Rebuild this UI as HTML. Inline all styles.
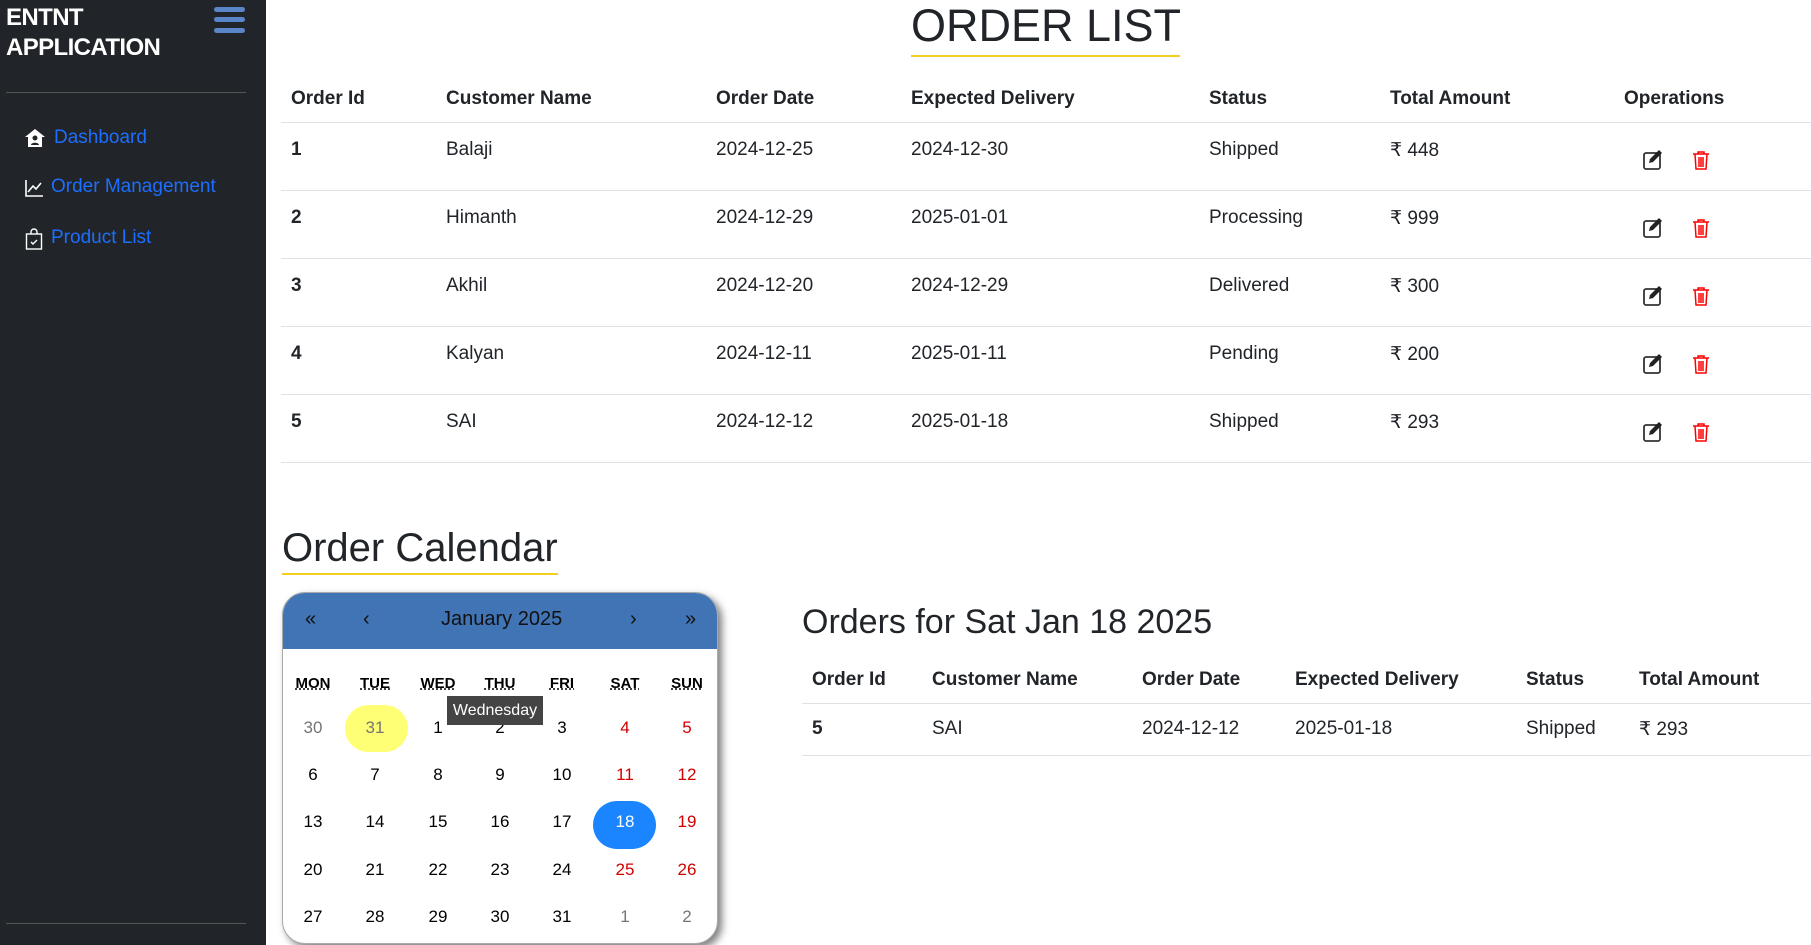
<!DOCTYPE html>
<html><head><meta charset="utf-8"><style>
*{margin:0;padding:0;box-sizing:border-box}
body{width:1811px;height:945px;overflow:hidden;background:#fff;font-family:"Liberation Sans",sans-serif;color:#212529;position:relative}
.sb{position:absolute;left:0;top:0;width:266px;height:945px;background:#212529}
.abs{position:absolute;white-space:nowrap}
.brand{left:6px;top:3px;color:#fff;font-size:24px;font-weight:bold;line-height:30px;letter-spacing:-0.6px}
.hb{left:214px;width:31px;height:5px;border-radius:3px;background:#5b85c9}
.nav{color:#1c6efd;font-size:19px;left:54px}
th,td{text-align:left;font-size:19px}
.t{position:absolute;border-collapse:collapse}
.t th{font-weight:bold;height:46px;border-bottom:1px solid #dee2e6;padding-left:10px}
.t td{border-bottom:1px solid #dee2e6;padding-left:10px;vertical-align:top}
.t1 td{height:68px;padding-top:16px}
.t1 td:first-child{font-weight:bold}
.cal{left:282px;top:592px;width:436px;height:352px;border:1px solid #aaa;border-radius:23px;overflow:hidden;box-shadow:4px 4px 8px rgba(0,0,0,.5);background:#fff}
.ch{height:56px;background:#4174b5;position:relative;font-size:20px;color:#111}
.ch span{position:absolute;top:15px}
.d{position:absolute;width:62px;text-align:center;font-size:17px;color:#000}
.w{font-weight:bold;font-size:15px;text-decoration:underline dotted}
.r{color:#d10000}.g{color:#757575}
</style></head><body>
<div class="sb">
<div class="abs brand">ENTNT<br>APPLICATION</div>
<div class="abs hb" style="top:7px"></div><div class="abs hb" style="top:17px"></div><div class="abs hb" style="top:28px"></div>
<div class="abs" style="left:6px;top:92px;width:240px;height:1px;background:#555"></div>
<svg class="abs" style="left:24px;top:128px" width="22" height="20" viewBox="0 0 22 20"><path d="M11 1L1 9h3v10h14V9h3z" fill="#fff"/><circle cx="11" cy="10" r="2.5" fill="#212529"/><path d="M7 17c0-3 8-3 8 0z" fill="#212529"/></svg>
<div class="abs nav" style="top:127px">Dashboard</div>
<svg class="abs" style="left:24px;top:178px" width="20" height="20" viewBox="0 0 20 20" fill="none" stroke="#fff" stroke-width="1.6"><path d="M2 2v16h17"/><path d="M4 14l5-6 3 3 5-6"/></svg>
<div class="abs nav" style="top:176px;left:51px">Order Management</div>
<svg class="abs" style="left:25px;top:228px" width="18" height="22" viewBox="0 0 18 22" fill="none" stroke="#fff" stroke-width="1.4"><rect x="1.5" y="6" width="15" height="15"/><path d="M6 6V4a3 3 0 016 0v2M6 14l2 2 4-4"/></svg>
<div class="abs nav" style="top:227px;left:51px">Product List</div>
<div class="abs" style="left:6px;top:923px;width:240px;height:1px;background:#555"></div>
</div>

<div class="abs" style="left:911px;top:0px;font-size:45px;color:#212529">ORDER LIST</div>
<div class="abs" style="left:911px;top:55px;width:269px;height:2px;background:#f0cf1f"></div>

<table class="t t1" style="left:281px;top:76px;width:1530px">
<tr><th style="width:155px">Order Id</th><th style="width:270px">Customer Name</th><th style="width:195px">Order Date</th><th style="width:298px">Expected Delivery</th><th style="width:181px">Status</th><th style="width:234px">Total Amount</th><th>Operations</th></tr>
<tr><td>1</td><td>Balaji</td><td>2024-12-25</td><td>2024-12-30</td><td>Shipped</td><td>₹ 448</td><td></td></tr>
<tr><td>2</td><td>Himanth</td><td>2024-12-29</td><td>2025-01-01</td><td>Processing</td><td>₹ 999</td><td></td></tr>
<tr><td>3</td><td>Akhil</td><td>2024-12-20</td><td>2024-12-29</td><td>Delivered</td><td>₹ 300</td><td></td></tr>
<tr><td>4</td><td>Kalyan</td><td>2024-12-11</td><td>2025-01-11</td><td>Pending</td><td>₹ 200</td><td></td></tr>
<tr><td>5</td><td>SAI</td><td>2024-12-12</td><td>2025-01-18</td><td>Shipped</td><td>₹ 293</td><td></td></tr>
</table>

<svg class="abs" style="left:0;top:0" width="1811" height="945">
<defs>
<g id="ed"><rect x="1" y="4" width="16" height="16" rx="2" fill="none" stroke="#333" stroke-width="1.8"/><path d="M6 14l1-4 9-9 3 3-9 9z" fill="#222"/></g>
<g id="tr" fill="none" stroke="#f00" stroke-width="1.5"><path d="M1 4h16M6 4V2h6v2M3 4l1 15h10l1-15M7 7v10M9 7v10M11 7v10"/></g>
</defs>
<use href="#ed" x="1643" y="149"/><use href="#tr" x="1692" y="150"/>
<use href="#ed" x="1643" y="217"/><use href="#tr" x="1692" y="218"/>
<use href="#ed" x="1643" y="285"/><use href="#tr" x="1692" y="286"/>
<use href="#ed" x="1643" y="353"/><use href="#tr" x="1692" y="354"/>
<use href="#ed" x="1643" y="421"/><use href="#tr" x="1692" y="422"/>
</svg>

<div class="abs" style="left:282px;top:526px;font-size:40px;color:#212529">Order Calendar</div>
<div class="abs" style="left:282px;top:573px;width:276px;height:2px;background:#f0cf1f"></div>

<div class="abs cal">
<div class="ch"><span style="left:22px">«</span><span style="left:80px">‹</span><span style="left:158px">January 2025</span><span style="left:347px">›</span><span style="left:402px">»</span></div>
<div class="d" style="left:62px;top:112px;width:63px;height:47px;border-radius:24px;background:#ffff76"></div>
<div class="d" style="left:310px;top:208px;width:63px;height:48px;border-radius:24px;background:#1a85ff"></div>
</div>
<div id="days"></div>
<div class="abs" style="left:447px;top:696px;width:96px;height:29px;background:#444;color:#fff;font-size:16px;text-align:center;line-height:29px;z-index:5">Wednesday</div>

<div class="abs" style="left:802px;top:603px;font-size:34px;color:#212529">Orders for Sat Jan 18 2025</div>
<table class="t" style="left:802px;top:657px;width:1009px">
<tr><th style="width:120px">Order Id</th><th style="width:210px">Customer Name</th><th style="width:153px">Order Date</th><th style="width:231px">Expected Delivery</th><th style="width:113px">Status</th><th>Total Amount</th></tr>
<tr><td style="font-weight:bold;height:52px;padding-top:14px">5</td><td style="padding-top:14px">SAI</td><td style="padding-top:14px">2024-12-12</td><td style="padding-top:14px">2025-01-18</td><td style="padding-top:14px">Shipped</td><td style="padding-top:14px">₹ 293</td></tr>
</table>

<script>
var xs=[313,375,438,500,562,625,687],h='';
var w=['MON','TUE','WED','THU','FRI','SAT','SUN'];
w.forEach(function(t,i){h+='<div class="abs d w" style="left:'+(xs[i]-31)+'px;top:675px">'+t+'</div>'});
var rows=[[30,31,1,2,3,4,5],[6,7,8,9,10,11,12],[13,14,15,16,17,18,19],[20,21,22,23,24,25,26],[27,28,29,30,31,1,2]],ys=[718,765,812,860,907];
rows.forEach(function(r,ri){r.forEach(function(n,i){var c='';if(i>=5)c='r';if((ri==0&&i<2)||(ri==4&&i>=5))c='g';var st='';if(ri==2&&i==5)st='color:#fff';h+='<div class="abs d '+c+'" style="left:'+(xs[i]-31)+'px;top:'+ys[ri]+'px;'+st+'">'+n+'</div>'})});
document.getElementById('days').innerHTML=h;
</script>
</body></html>
